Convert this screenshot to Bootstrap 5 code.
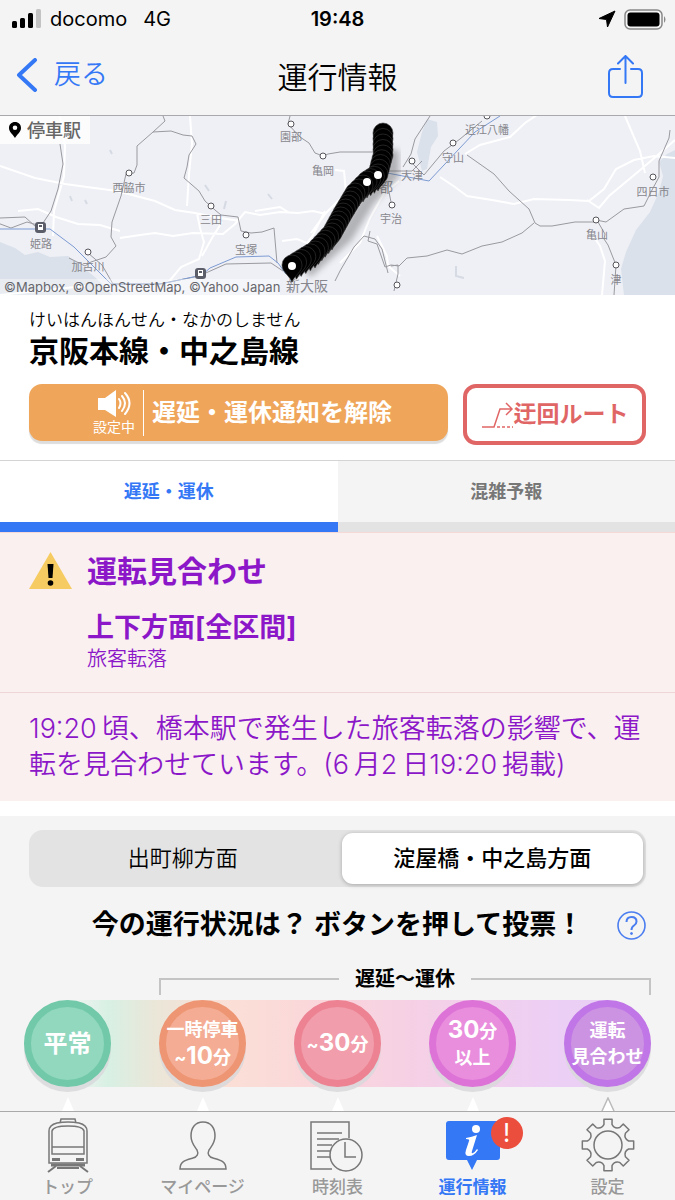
<!DOCTYPE html>
<html lang="ja">
<head>
<meta charset="utf-8">
<meta name="viewport" content="width=device-width, initial-scale=1">
<title>運行情報</title>
<link href="https://cdn.jsdelivr.net/npm/bootstrap@5.3.0/dist/css/bootstrap.min.css" rel="stylesheet">
<style>
  :root { --blue: #3478f6; --soft: #f4f4f4; --purple: #8b17c8; }
  body { font-family: Inter, "Noto Sans CJK JP", sans-serif; background: var(--soft); color: #000; line-height: 1.5; }
  button { font-family: inherit; }
  a { text-decoration: none; }
  .status { height: 38px; font-size: 20px; }
  .side { flex: 1 1 0; }
  .clock { font-weight: 600; }
  .topbar { height: 78px; border-bottom: 1px solid #a9a9ad; }
  .topbar h1 { font-size: 30px; font-weight: 350; }
  .back { font-size: 27px; font-weight: 350; color: var(--blue); }
  .mapbox { height: 179px; background: #eff0f6; overflow: hidden; }
  .mapbox svg { width: 100%; height: 100%; display: block; }
  .legend-tag { background: #ffffffcc; font-size: 18px; font-weight: 500; color: #666; height: 28px; width: 90px; }
  .credit { font-size: 13px; line-height: 16px; color: #66666c; background: #ffffff66; }
  .gutter { padding-left: 29px; padding-right: 29px; }
  .line-head { padding-top: 13px; padding-bottom: 15px; }
  .ruby-line { font-size: 17px; line-height: 24px; font-weight: 350; }
  .line-name { font-size: 30px; line-height: 38px; font-weight: 700; }
  .actions { margin-top: 14px; gap: 15px; }
  .notify { height: 57px; border: 0; border-radius: 13px; background: #efa65b; color: #fff; box-shadow: 0 3px 1px #ddd; font-size: 24px; font-weight: 700; flex: 1 1 0; }
  .notify-state { font-size: 14px; line-height: 18px; font-weight: 400; }
  .notify-sep { width: 1px; height: 46px; background: #fff; }
  .detour { height: 61px; width: 183px; border: 4px solid #e06666; border-radius: 13px; background: #fff; color: #e06666; font-size: 23px; font-weight: 700; }
  .switch-tabs { border-top: 1px solid #d4d4d4; }
  .switch-tabs button { flex: 1 1 0; height: 71px; border: 0; border-bottom: 10px solid #e3e3e3; background: var(--soft); color: #777; font-size: 18px; font-weight: 700; }
  .switch-tabs button.on { background: #fff; color: var(--blue); border-bottom-color: var(--blue); }
  .notice { background: #faf0f0; color: var(--purple); }
  .notice-top { height: 161px; padding-top: 15px; border-top: 1px solid #f5d9d9; border-bottom: 1px solid #efd5d5; gap: 15px; }
  .notice-top h2 { font-size: 30px; line-height: 46px; font-weight: 700; margin: 0; }
  .notice-top h3 { font-size: 27px; line-height: 36px; font-weight: 700; margin: 16px 0 0; }
  .cause { font-size: 20px; line-height: 26px; font-weight: 350; }
  .detail { font-size: 27px; line-height: 36px; font-weight: 350; padding-top: 18px; padding-bottom: 18px; margin: 0; }
  .gap-strip { height: 15px; background: #fff; }
  .segment { margin-top: 14px; height: 57px; background: #e3e3e3; border-radius: 14px; padding: 3px; gap: 8px; }
  .segment button { flex: 1 1 0; border: 0; border-radius: 11px; background: transparent; font-size: 22px; font-weight: 350; padding: 0; }
  .segment button.on { background: #fff; font-weight: 500; box-shadow: 0 1px 4px #0004; }
  .ask { height: 76px; }
  .ask h2 { font-size: 27px; font-weight: 700; margin: 0; white-space: nowrap; }
  .bracket { margin-left: 159px; margin-right: 24px; height: 32px; gap: 16px; font-size: 20px; font-weight: 700; line-height: 32px; }
  .arm { flex: 1 1 0; height: 17px; border: 2px solid #c4c4c4; border-bottom: 0; margin-top: 15px; }
  .arm-l { border-right: 0; } .arm-r { border-left: 0; }
  .votes { height: 87px; margin-top: 5px; background: linear-gradient(90deg, #f4f4f4 10%, #d8f0e4 16%, #eae6d8 23%, #fbdfd6 34%, #fad5db 49%, #f5d0e6 62%, #edcff5 82%, #e8cff5 90%, #f4f4f4 90%); }
  .vote { width: 87px; height: 87px; border-radius: 50%; border: 7px solid var(--rim); background: var(--fill); color: #fff; font-size: 18px; line-height: 26px; font-weight: 700; box-shadow: 0 5px 0 #d8d8dad0; padding: 0; display: flex; flex-direction: column; align-items: center; justify-content: center; white-space: nowrap; }
  .vote b { font-size: 24px; font-weight: 700; }
  .cell { flex: 1 1 0; display: flex; justify-content: center; }
  .tips { height: 24px; padding-top: 10px; }
  .tabbar { height: 89px; border-top: 1px solid #a9a9a9; background: var(--soft); }
  .tabbar a { flex: 1 1 0; color: #999; font-size: 17px; font-weight: 500; line-height: 24px; padding-top: 5px; }
  .tabbar a.on { color: var(--blue); font-weight: 700; }
  .tabbar svg { width: 60px; height: 58px; }
  .alert-dot { width: 32px; height: 32px; border-radius: 50%; background: #eb4e3d; color: #fff; font-size: 25px; line-height: 32px; top: 5px; left: 50%; margin-left: 18px; text-align: center; font-weight: 400; }
</style>
</head>
<body>
<header>
  <div class="status d-flex align-items-center px-2">
    <div class="side d-flex align-items-center">
      <svg class="ms-1 me-2" width="30" height="20" viewBox="0 0 30 20"><rect y="12" width="5" height="7" rx="1.500"/><rect x="8" y="9" width="5" height="10" rx="1.500"/><rect x="16" y="4" width="5" height="15" rx="1.500"/><rect x="24" width="5" height="19" rx="1.500" fill="#c3c3c3"/></svg>
      <span>docomo</span><span class="ms-3">4G</span>
    </div>
    <div class="clock">19:48</div>
    <div class="side d-flex align-items-center justify-content-end gap-2">
      <svg width="18" height="18" viewBox="0 0 18 18"><path d="M17 1 1 8.500l7.500 1L9.500 17z" stroke="#000" stroke-linejoin="round"/></svg>
      <svg width="43" height="21" viewBox="0 0 43 21"><rect x="1" y="1" width="37" height="19" rx="5" fill="none" stroke="#888" stroke-width="1.500"/><rect x="3.500" y="3.500" width="32" height="14" rx="3"/><path d="M40 7q3 3.500 0 7z" fill="#888"/></svg>
    </div>
  </div>
  <nav class="topbar d-flex align-items-center px-3" aria-label="ナビゲーション">
    <div class="side"><a class="back d-inline-flex align-items-center" href="#">
      <svg class="me-3" width="22" height="34" viewBox="0 0 22 34" fill="none" stroke="#3478f6" stroke-width="4" stroke-linecap="round" stroke-linejoin="round"><path d="M19 2 3 17l16 15"/></svg>戻る</a></div>
    <h1 class="m-0">運行情報</h1>
    <div class="side text-end"><button class="btn p-0 border-0 me-3" aria-label="共有">
      <svg width="35" height="44" viewBox="0 0 35 44" fill="none" stroke="#3478f6" stroke-width="2" stroke-linecap="round" stroke-linejoin="round"><path d="M12 14H5q-4 0-4 4v20q0 4 4 4h25q4 0 4-4V18q0-4-4-4h-7M17.500 28V1M10 8.500 17.500 1 25 8.500"/></svg></button></div>
  </nav>
</header>

<main>
  <section class="mapbox position-relative">
    <svg viewBox="0 0 675 179" preserveAspectRatio="xMidYMid slice" font-size="11" fill="#86868c">
      <defs><filter id="soft"><feGaussianBlur stdDeviation="3"/></filter></defs>
      <g fill="#dae1ea">
        <path d="M675 34l-8 4-8 8 4 14-4 16-9 20-14 18-10 22-5 17 3 26H675z"/>
        <path d="M0 126l15 6 10 7 13-3 12 5 18-1 15 11 14 12 15 16H0z"/>
        <path d="M427 3l10 3 1 14-7 11-4 22-5 2-5-19 5-20z"/>
      </g>
      <g fill="none" stroke="#fff" stroke-width="2">
        <path d="M0 50l35 12 30 6 22 3 30 4 38 10 20 9 20 3 25 5 20 3M60 0l5 30-1 30-10 35-1 25M190 0l2 28-3 30-2 32M18 95l20-2 18 8 22 7 22 1 20 6M120 122l20-3 15-2 18 3 20-3 30 1 12-10 10-12 15 3 20-3 18 1 15-2 13 3M197 97l3 15 4 14-5 17-18 8-15 18M202 140l10-18 10-16M282 125l15-2 10 4 6-8 12-24M255 95l25-4 8 5M465 38l15-9 30-8 15-14 15-10M440 61l15 10 12 9 25 4 22 4 20-5 35 1 20 1 15-12 12-20 18-9 20-4 30 3 15 5M625 0l15 35 5 22M587 84l12 8 10-12 30-25 20-17 16-14M590 115l10 15 5 15-3 34M340 147l20-20 10-25 14-25 15-12M377 120l10 20 1 10 12 10M335 54l9 1 2 22-20 20-15 20M0 179L85 170"/>
      </g>
      <g fill="none" stroke="#99999f">
        <path d="M163 0l2 5-12 11-16 14 0 19-3 8-8 1-5 22-9 26-1 15 5 9-10 11-15 5-6 4-16-8M153 16l18-1 12 4 9 1 4 8-7 11-2 12-3 11 15 13 6 10 10 9 6 5 17 2 3 14 10 2 11-1 12-4 3 35M60 28l3 20-5 25-7 22-10 15-14-4-16 6-16-6M0 102l25-1 11 10M88 137l14 12 11 19M113 168l46 0 40-8 27-12 45-1 12 8M290 0l-2 8 12 13 9 6 6 10 8 3 5-2 12-2h47M380 55l32 0 10-10M430 0l-15 23-4 15-8 13M411 46l13 13 20-24 16-12 22-18M467 39l27 19 15 17 20 18 6 14 5 3 12 0 23-4 22 0M534 107l-12 10-20 9-20 4-20 8-15-4-20 6-20 2-8 8-8-1-6 2-8-23-9-3 2-10M391 86l-2-10M596 104l10 2 18-13 20-3 8-16 7-13 0-16 10-23 1-8M598 106l7 12-1 5 4 6 8 20-2 30M391 150l7-1 0 9-4 17M335 165l5-10 14-24 10-11 11 3 7 10 6 24M290 167l20-15 2-10"/>
      </g>
      <path d="M0 113h50l24 18 37 37h50l41-9 8-7 26-11 33-1 9 7 8 11M382 56l47 9 15-16 15-16 16-17 25-16" fill="none" stroke="#7d9bd3"/>
      <path d="M456 150v10l8 2M70 80l2 5M85 84l2 4M205 69l4 6M226 85l-2 8M268 78l4 5M110 34l2 4" fill="none" stroke="#d6dae3" stroke-width="2"/>
      <g fill="#fff" stroke="#55555b">
        <circle cx="291" cy="8" r="3"/><circle cx="323" cy="40" r="3"/><circle cx="129" cy="57" r="3"/><circle cx="211" cy="90" r="3"/><circle cx="246" cy="119" r="3"/><circle cx="88" cy="136" r="3"/><circle cx="412" cy="45" r="3"/><circle cx="453" cy="27" r="3"/><circle cx="487" cy="0" r="3"/><circle cx="392" cy="89" r="3"/><circle cx="653" cy="61" r="3"/><circle cx="596" cy="104" r="3"/><circle cx="616" cy="149" r="3"/><circle cx="397" cy="169" r="3"/>
      </g>
      <g id="stn"><rect x="35" y="106" width="11" height="11" rx="3" fill="#5b5d68"/><path d="M38 108h5v6h-5z" fill="#fff"/><path d="M39 109h3v2h-3z" fill="#5b5d68"/></g>
      <use href="#stn" x="160" y="46"/>
      <g text-anchor="middle">
        <text x="291" y="25">園部</text><text x="323" y="59">亀岡</text><text x="129" y="76">西脇市</text><text x="211" y="108">三田</text><text x="246" y="138">宝塚</text><text x="41" y="132">姫路</text><text x="88" y="155">加古川</text><text x="412" y="64">大津</text><text x="453" y="46">守山</text><text x="487" y="18">近江八幡</text><text x="391" y="107">宇治</text><text x="653" y="80">四日市</text><text x="597" y="123">亀山</text><text x="616" y="168">津</text><text x="386" y="76" font-size="14">都</text><text x="307" y="175" font-size="14">新大阪</text>
      </g>
      <path d="M392 34l0 24-24 26-22 36-40 36" fill="none" stroke="#555" stroke-width="14" opacity=".4" filter="url(#soft)"/>
      <g id="pins"></g>
      <g fill="#fff"><circle cx="378" cy="59" r="4"/><circle cx="367" cy="66" r="4"/><circle cx="292" cy="150" r="4"/></g>
    </svg>
    <div class="legend-tag position-absolute top-0 start-0 d-flex align-items-center">
      <svg class="ms-2" viewBox="0 0 14 18" style="width:14px;height:18px;margin-right:5px"><path fill="#000" fill-rule="evenodd" d="M7 1C3.500 1 1 3.500 1 7c0 4 4 6.500 6 10 2-3.500 6-6 6-10 0-3.500-2.500-6-6-6zm0 3.500a2.300 2.300 0 1 1 0 4.600 2.300 2.300 0 0 1 0-4.600z"/></svg>停車駅
    </div>
    <div class="credit position-absolute bottom-0 start-0 ps-1">©Mapbox, ©OpenStreetMap, ©Yahoo Japan</div>
  </section>

  <section class="line-head gutter bg-white">
    <div class="ruby-line">けいはんほんせん・なかのしません</div>
    <h2 class="line-name m-0">京阪本線・中之島線</h2>
    <div class="actions d-flex align-items-start">
      <button class="notify d-flex align-items-center justify-content-center">
        <span class="notify-state d-flex flex-column align-items-center ms-2">
          <svg width="34" height="29" viewBox="0 0 34 29" fill="none" stroke="#fff" stroke-width="2" stroke-linecap="round"><path d="M1 9h7L19 1v27L8 21H1z" fill="#fff" stroke="none"/><path d="M22 10q3 4 0 9M25 7q6 7 0 15M28 4q9 10 0 21"/></svg>
          設定中
        </span>
        <span class="notify-sep mx-2"></span>
        <span class="text-nowrap">遅延・運休通知を解除</span>
      </button>
      <button class="detour d-flex align-items-center justify-content-center p-0 text-nowrap">
        <svg width="33" height="28" viewBox="0 0 33 28" fill="none" stroke="#e06666" stroke-width="1.500"><path d="M1 26h12l6-18h12M25 2l6 6-6 6"/><path d="M16 26h16" stroke-dasharray="3 2"/></svg>迂回ルート
      </button>
    </div>
  </section>

  <div class="switch-tabs d-flex" role="tablist">
    <button class="on" role="tab" aria-selected="true">遅延・運休</button>
    <button role="tab" aria-selected="false">混雑予報</button>
  </div>

  <section class="notice">
    <div class="notice-top gutter d-flex align-items-start">
      <svg class="mt-1" width="43" height="37" viewBox="0 0 43 37"><path d="M21.500 0 43 37H0z" fill="#f6cc62"/><path d="M18.500 12h6l-1 14h-4z"/><circle cx="21.500" cy="31" r="2.800"/></svg>
      <div>
        <h2>運転見合わせ</h2>
        <h3>上下方面[全区間]</h3>
        <div class="cause">旅客転落</div>
      </div>
    </div>
    <p class="detail gutter">19:20&thinsp;頃、橋本駅で発生した旅客転落の影響で、運転を見合わせています。(6&thinsp;月2&thinsp;日19:20&thinsp;掲載)</p>
  </section>
  <div class="gap-strip"></div>

  <section>
    <div class="gutter">
      <div class="segment d-flex">
        <button>出町柳方面</button>
        <button class="on">淀屋橋・中之島方面</button>
      </div>
      <div class="ask d-flex align-items-center">
        <div class="side"></div>
        <h2>今の運行状況は？ ボタンを押して投票！</h2>
        <div class="side text-end"><button class="btn p-0 border-0" aria-label="ヘルプ">
          <svg width="29" height="29" viewBox="0 0 29 29" fill="none" stroke="#4a7df0" stroke-width="1.600"><circle cx="14.500" cy="14.500" r="13.500"/><path d="M9.500 11q0-5 5-5t5 4.500q0 2.500-2.500 4t-2.500 4.500" stroke-width="2"/><circle cx="14.500" cy="22.500" r="1" fill="#4a7df0" stroke-width="1"/></svg></button></div>
      </div>
    </div>
    <div class="bracket d-flex">
      <span class="arm arm-l"></span><span>遅延〜運休</span><span class="arm arm-r"></span>
    </div>
    <div class="votes d-flex">
      <div class="cell"><button class="vote" style="--rim:#72c9a9;--fill:#91d8bf"><b>平常</b></button></div>
      <div class="cell"><button class="vote" style="--rim:#ee9674;--fill:#f4ad94"><span>一時停車</span><span>~<b>10</b>分</span></button></div>
      <div class="cell"><button class="vote" style="--rim:#ec8292;--fill:#f19dab"><span>~<b>30</b>分</span></button></div>
      <div class="cell"><button class="vote" style="--rim:#dd73d6;--fill:#e98ddd"><span><b>30</b>分</span><span>以上</span></button></div>
      <div class="cell"><button class="vote" style="--rim:#c076e6;--fill:#cd93e3"><span>運転</span><span>見合わせ</span></button></div>
    </div>
    <div class="tips d-flex">
      <div class="cell"><svg width="14" height="14"><path d="M1 14 7 0l6 14z" fill="#fff"/></svg></div>
      <div class="cell"><svg width="14" height="14"><path d="M1 14 7 0l6 14z" fill="#fff"/></svg></div>
      <div class="cell"><svg width="14" height="14"><path d="M1 14 7 0l6 14z" fill="#fff"/></svg></div>
      <div class="cell"><svg width="14" height="14"><path d="M1 14 7 0l6 14z" fill="#fff"/></svg></div>
      <div class="cell"><svg width="14" height="14"><path d="M1 14 7 1l6 13" fill="#fff" stroke="#bbb" stroke-width="1.500"/></svg></div>
    </div>
  </section>
</main>

<nav class="tabbar d-flex sticky-bottom text-center" aria-label="メニュー">
  <a href="#" class="d-flex flex-column align-items-center">
    <svg viewBox="0 0 60 58" fill="none" stroke="#777" stroke-width="1.500"><path d="M22 6l1-4h14l1 4M11 46V14q0-6 8-8 11-2 22 0 8 2 8 8v32z"/><path d="M14 37V14q1-5 16-5t16 5v23zM14 30h32"/><path d="M14 41h8v3h-8zM38 41h8v3h-8z" fill="#777" stroke="none"/><path d="M13 48h34" stroke-width="3"/><path d="M18 49 10 55M42 49l8 6M19 51h22" stroke-width="2"/></svg>
    <span>トップ</span></a>
  <a href="#" class="d-flex flex-column align-items-center">
    <svg viewBox="0 0 60 58" fill="none" stroke="#777" stroke-width="1.500"><path d="M30 5c-8 0-12 6-12 14 0 7 4 11 6 14 2 4 0 7-4 8-7 2-13 3-13 11h46c0-8-6-9-13-11-4-1-6-4-4-8 2-3 6-7 6-14 0-8-4-14-12-14z"/></svg>
    <span>マイページ</span></a>
  <a href="#" class="d-flex flex-column align-items-center">
    <svg viewBox="0 0 60 58" fill="none" stroke="#777" stroke-width="1.500"><path d="M24 52H3V5h38v16M9 16h25M9 22h22M9 28h15M9 34h13M9 40h13"/><circle cx="38" cy="38" r="16"/><path d="M37 25v15h11"/></svg>
    <span>時刻表</span></a>
  <a href="#" class="on d-flex flex-column align-items-center position-relative">
    <svg viewBox="0 0 60 58"><path d="M6 4h48q3 0 3 3v33q0 3-3 3H34l-5 10-5-10H6q-3 0-3-3V7q0-3 3-3z" fill="#3478f6"/><circle cx="33" cy="12" r="4" fill="#fff"/><path d="M23 21q6-1 11-3l-5 16q-1 3 1 2 2-1 4-4l1 1q-4 6-9 6-5 0-3-6l3-9q1-2-3-2z" fill="#fff"/></svg>
    <span class="alert-dot position-absolute">!</span>
    <span>運行情報</span></a>
  <a href="#" class="d-flex flex-column align-items-center">
    <svg viewBox="0 0 60 58" fill="none" stroke="#777" stroke-width="1.500" stroke-linejoin="round"><circle cx="30" cy="28" r="14"/><path id="gear"/></svg>
    <span>設定</span></a>
</nav>
<script src="https://cdn.jsdelivr.net/npm/bootstrap@5.3.0/dist/js/bootstrap.bundle.min.js"></script>
<script>
  // Station pins, placed along the line from north to south.
  const route = [[383, 18], [383, 40], [378, 59], [367, 66], [355, 78], [343, 98], [332, 118], [315, 136], [292, 150]];
  let pins = '';
  route.slice(1).forEach(([x, y], i) => {
    const [px, py] = route[i];
    const n = Math.max(1, Math.round(Math.hypot(x - px, y - py) / 5));
    for (let k = i ? 1 : 0; k <= n; k++) {
      const cx = px + (x - px) * k / n, cy = py + (y - py) * k / n;
      pins += `<path transform="translate(${cx} ${cy})" d="M0 16C-3 9-10 6-10-1a10 10 0 0 1 20 0C10 6 3 9 0 16z" fill="#000" stroke="#3a3a3a" stroke-width=".6"/>`;
    }
  });
  document.getElementById('pins').innerHTML = pins;

  // Gear outline: eight teeth joined by inward curves.
  let d = '';
  for (let i = 0; i < 8; i++) {
    const at = (r, deg) => { const t = (i * 45 + deg) * Math.PI / 180; return `${30 + r * Math.sin(t)} ${28 - r * Math.cos(t)}`; };
    d += `${i ? 'L' : 'M'}${at(21, -11)}L${at(26, -9)}L${at(26, 9)}L${at(21, 11)}Q${at(17, 22)} ${at(21, 34)}`;
  }
  document.getElementById('gear').setAttribute('d', d + 'Z');
</script>
</body>
</html>
